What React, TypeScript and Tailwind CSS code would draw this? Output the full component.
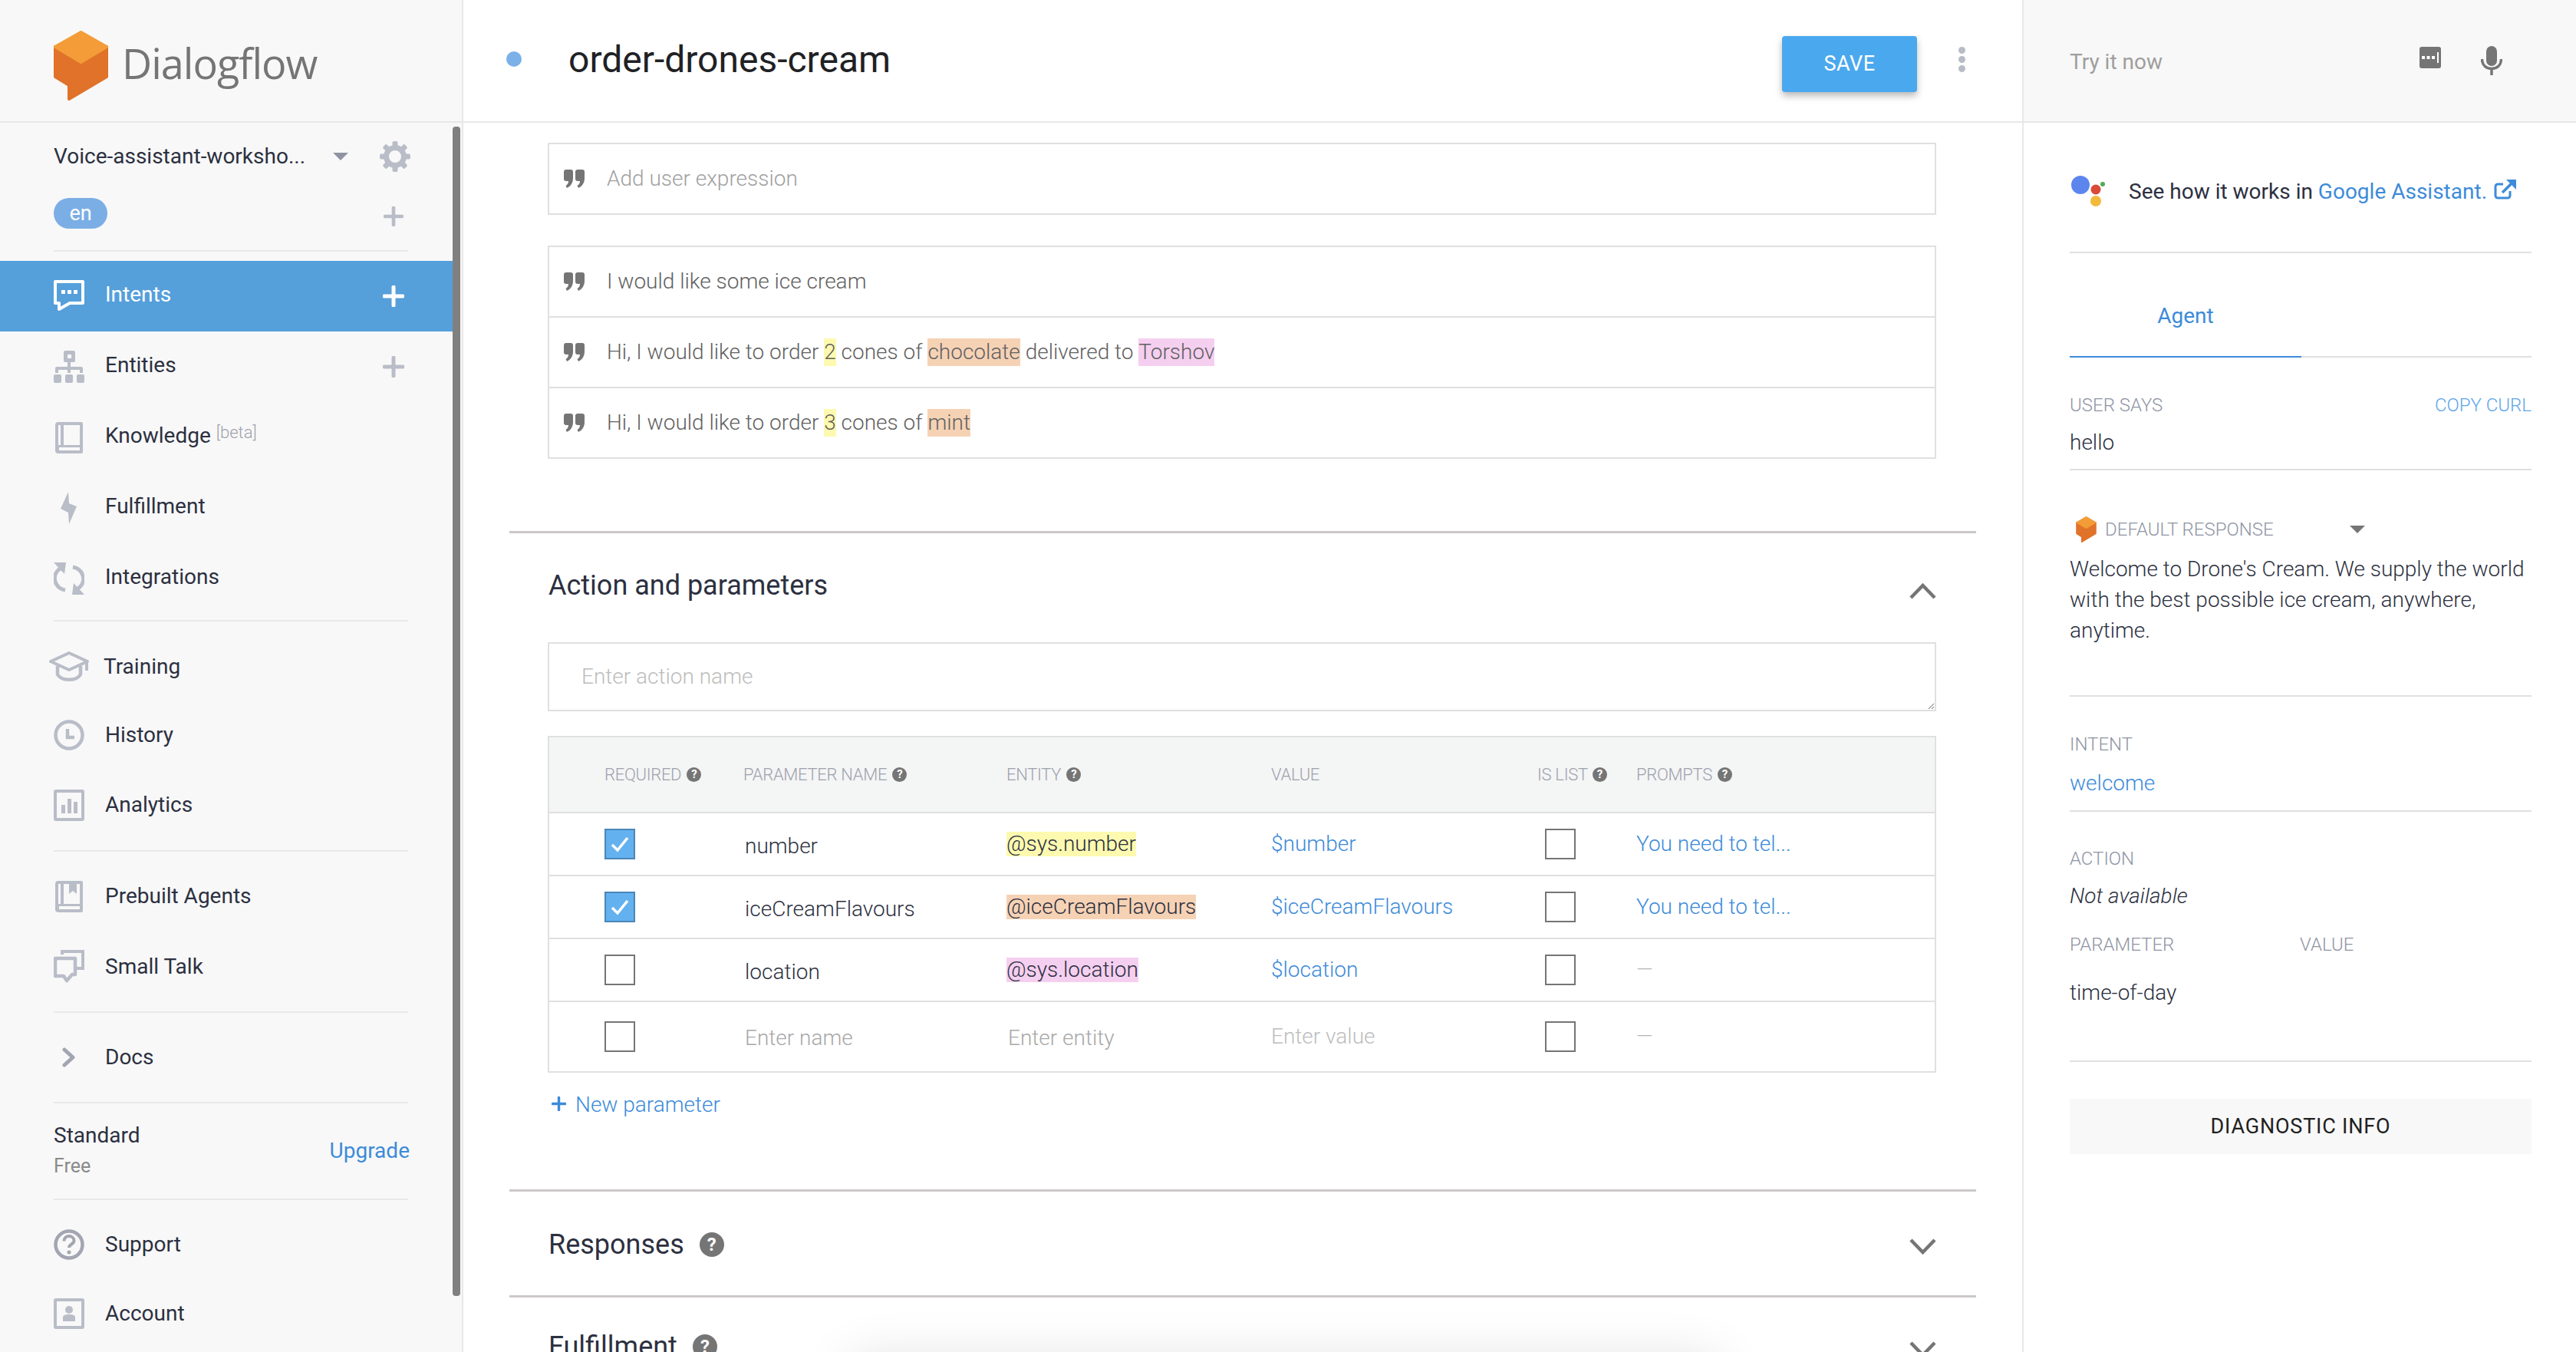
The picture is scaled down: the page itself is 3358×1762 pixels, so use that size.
import type { ReactNode } from 'react';

const iconGray = '#b9bdc8';

function Logo({ className }: { className: string }) {
  return (
    <svg className={className} viewBox="0 0 71 91">
      <path
        d="M2 21 35.5 41 69 21V60L20 89V71L2 60Z"
        fill="#e0722a"
        stroke="#e0722a"
        strokeWidth="4"
        strokeLinejoin="round"
      />
      <path
        d="M35.5 2 69 21 35.5 41 2 21Z"
        fill="#f39c38"
        stroke="#f39c38"
        strokeWidth="4"
        strokeLinejoin="round"
      />
    </svg>
  );
}

function Plus({ className, color = iconGray }: { className: string; color?: string }) {
  return (
    <svg className={className} viewBox="0 0 28 28">
      <path d="M14 2v24M2 14h24" stroke={color} strokeWidth="5" strokeLinecap="round" />
    </svg>
  );
}

function GearIcon() {
  const teeth = [0, 45, 90, 135, 180, 225, 270, 315];
  return (
    <svg className="w-[40px] h-[40px] ml-[41px]" viewBox="0 0 40 40">
      <circle cx="20" cy="20" r="11.5" fill="none" stroke={iconGray} strokeWidth="7" />
      {teeth.map((deg) => (
        <rect key={deg} x="16.500" y="0" width="7" height="8" rx="2" fill={iconGray} transform={`rotate(${deg} 20 20)`} />
      ))}
    </svg>
  );
}

function IntentsIcon() {
  return (
    <svg className="w-[40px] h-[42px]" viewBox="0 0 40 42">
      <path d="M2 2H38V30H21L7 38V30H2Z" fill="none" stroke="#fff" strokeWidth="4" strokeLinejoin="round" />
      <path d="M10 13h5v5h-5zM18 13h5v5h-5zM26 13h5v5h-5z" fill="#fff" />
    </svg>
  );
}

function EntitiesIcon() {
  return (
    <svg className="w-[40px] h-[42px]" viewBox="0 0 40 42">
      <path
        d="M15 0h11a2 2 0 0 1 2 2v11a2 2 0 0 1-2 2h-4v6h14a2 2 0 0 1 2 2v6h-4v-4H22v4h-4v-4H6v4H2v-6a2 2 0 0 1 2-2h14v-6h-3a2 2 0 0 1-2-2V2a2 2 0 0 1 2-2Zm3 5v5h5V5Z"
        fill={iconGray}
        fillRule="evenodd"
      />
      <rect x="0" y="31" width="10" height="11" rx="2" fill={iconGray} />
      <rect x="15" y="31" width="10" height="11" rx="2" fill={iconGray} />
      <rect x="30" y="31" width="10" height="11" rx="2" fill={iconGray} />
    </svg>
  );
}

function BookIcon({ mark = false }: { mark?: boolean }) {
  return (
    <svg className="w-[36px] h-[41px]" viewBox="0 0 36 41">
      <path
        d="M4 0h30a2 2 0 0 1 2 2v37a2 2 0 0 1-2 2H4a4 4 0 0 1-4-4V4a4 4 0 0 1 4-4Zm3 4H4v26h3Zm4 0v26h21V4ZM5 33v4h27v-4Z"
        fill={iconGray}
        fillRule="evenodd"
      />
      {mark && <path d="M18 2h10v15l-5-4-5 4Z" fill={iconGray} />}
    </svg>
  );
}

function BoltIcon() {
  return (
    <svg className="w-[22px] h-[42px]" viewBox="0 0 22 42">
      <path d="M10 0 11 15 21 19 11 42 10 27 0 22Z" fill={iconGray} />
    </svg>
  );
}

function SyncIcon() {
  return (
    <svg className="w-[40px] h-[42px]" viewBox="0 0 40 42">
      <path d="M10 7C3 11 0 18 2 25c2 6 7 10 13 11" fill="none" stroke={iconGray} strokeWidth="5" />
      <path d="M30 35c7-4 10-11 8-18C36 11 31 7 25 6" fill="none" stroke={iconGray} strokeWidth="5" />
      <path d="M0 0H16L14 15Z" fill={iconGray} />
      <path d="M40 42H24L26 27Z" fill={iconGray} />
    </svg>
  );
}

function CapIcon() {
  return (
    <svg className="w-[54px] h-[40px] -mx-[7px] shrink-0" viewBox="0 0 54 40">
      <path d="M27 2 51 13 27 24 3 13Z" fill="none" stroke={iconGray} strokeWidth="4" strokeLinejoin="round" />
      <path d="M12 19V30c5 9 25 9 30 0V19" fill="none" stroke={iconGray} strokeWidth="4.5" />
      <path d="M50 13V25" stroke={iconGray} strokeWidth="4" />
    </svg>
  );
}

function ClockIcon() {
  return (
    <svg className="w-[40px] h-[40px]" viewBox="0 0 40 40">
      <circle cx="20" cy="20" r="17.5" fill="none" stroke={iconGray} strokeWidth="4.5" />
      <path d="M18 12v11h9" fill="none" stroke={iconGray} strokeWidth="4.5" />
    </svg>
  );
}

function ChartIcon() {
  return (
    <svg className="w-[40px] h-[41px]" viewBox="0 0 40 41">
      <rect x="2" y="2" width="36" height="37" fill="none" stroke={iconGray} strokeWidth="4" rx="1" />
      <path d="M10 20h5v11h-5zM18 12h5v19h-5zM26 16h5v15h-5z" fill={iconGray} />
    </svg>
  );
}

function TalkIcon() {
  return (
    <svg className="w-[40px] h-[44px]" viewBox="0 0 40 44">
      <path d="M11 6V2H38V24H29" fill="none" stroke={iconGray} strokeWidth="4" />
      <path d="M2 11H28V32H24L17 40 13 34H2Z" fill="none" stroke={iconGray} strokeWidth="4.5" strokeLinejoin="round" />
    </svg>
  );
}

function ChevronRight() {
  return (
    <svg className="w-[18px] h-[26px]" viewBox="0 0 18 26">
      <path d="M3 3 14 13 3 23" fill="none" stroke="#a2a6b2" strokeWidth="5" strokeLinecap="round" strokeLinejoin="round" />
    </svg>
  );
}

function SupportIcon() {
  return (
    <svg className="w-[40px] h-[40px]" viewBox="0 0 40 40">
      <circle cx="20" cy="20" r="17.5" fill="none" stroke="#a2a6b2" strokeWidth="4.5" />
      <path d="M13.5 15.5c0-4 3-6.5 6.5-6.5s6.5 2.500 6.500 6c0 4.500-6.500 4.500-6.500 9" fill="none" stroke="#a2a6b2" strokeWidth="4" />
      <circle cx="20" cy="30" r="2.500" fill="#a2a6b2" />
    </svg>
  );
}

function AccountIcon() {
  return (
    <svg className="w-[40px] h-[40px]" viewBox="0 0 40 40">
      <rect x="2" y="2" width="36" height="36" fill="none" stroke={iconGray} strokeWidth="4" rx="1" />
      <circle cx="20" cy="15" r="5" fill={iconGray} />
      <path d="M12 30v-5c0-3 3-4 8-4s8 1 8 4v5Z" fill={iconGray} />
    </svg>
  );
}

function NavRow({
  icon,
  label,
  extra,
  lift = false,
  className = 'h-[92px]',
}: {
  icon: ReactNode;
  label: ReactNode;
  extra?: ReactNode;
  lift?: boolean;
  className?: string;
}) {
  return (
    <div className={`flex items-center pl-[70px] pr-[66px] text-[28px] text-[#2c3040] ${className}`}>
      <span className="w-[40px] flex items-center justify-center shrink-0">{icon}</span>
      <span className={`ml-[27px] flex-1 ${lift ? '-mt-[4px]' : ''}`}>{label}</span>
      {extra}
    </div>
  );
}

function Divider() {
  return <div className="ml-[70px] w-[462px] h-[2px] bg-[#e8e8e8]" />;
}

function Sidebar() {
  return (
    <aside className="relative w-[604px] shrink-0 h-full bg-[#f8f8f8] border-r-2 border-[#e8e8e8]">
      <div className="h-[160px] border-b-2 border-[#e8e8e8] pl-[70px] flex items-center">
        <Logo className="w-[71px] h-[91px] mt-[12px]" />
        <span className="ml-[18px] mt-[6px] text-[54px] font-medium tracking-[-1px] text-[#757575] font-['Open_Sans',sans-serif] leading-none">
          Dialogflow
        </span>
      </div>
      <div className="absolute left-[590px] top-[165px] h-[1524px] w-[10px] rounded-[4px] bg-[#808080]" />

      <div className="flex items-center h-[88px] pl-[70px] text-[28px] text-[#2c3040]">
        <span className="w-[364px]">Voice-assistant-worksho...</span>
        <span className="w-0 h-0 border-x-[10px] border-t-[10px] border-x-transparent border-t-[#8f94a3]" />
        <GearIcon />
      </div>
      <div className="flex items-center justify-between mt-[10px] pl-[70px] pr-[76px] h-[40px]">
        <span className="w-[70px] h-[40px] rounded-full bg-[#7baee5] text-white text-[27px] flex items-center justify-center">
          en
        </span>
        <Plus className="w-[26px] h-[26px] mt-[8px]" />
      </div>
      <div className="mt-[28px]">
        <Divider />
      </div>

      <div className="mt-[12px] mr-[12px]">
        <NavRow
          lift
          className="h-[92px] bg-[#559fdb] !text-white"
          icon={<IntentsIcon />}
          label="Intents"
          extra={<Plus className="w-[28px] h-[28px] mr-[-3px]" color="#fff" />}
        />
      </div>
      <NavRow lift icon={<EntitiesIcon />} label="Entities" extra={<Plus className="w-[28px] h-[28px] mr-[9px]" />} />
      <NavRow
        lift
        icon={<BookIcon />}
        label={
          <>
            Knowledge{' '}
            <sup className="text-[22px] font-light text-[#9ea1ad] relative -top-[6px]">[beta]</sup>
          </>
        }
      />
      <NavRow lift icon={<BoltIcon />} label="Fulfillment" />
      <NavRow lift icon={<SyncIcon />} label="Integrations" />

      <div className="mt-[8px]">
        <Divider />
      </div>
      <div className="mt-[15px]">
        <NavRow className="h-[88px]" icon={<CapIcon />} label={<span className="-ml-[2px]">Training</span>} />
        <NavRow className="h-[90px]" icon={<ClockIcon />} label="History" />
        <NavRow icon={<ChartIcon />} label="Analytics" />
      </div>

      <div className="mt-[13px]">
        <Divider />
      </div>
      <div className="mt-[12px]">
        <NavRow icon={<BookIcon mark />} label="Prebuilt Agents" />
        <NavRow icon={<TalkIcon />} label="Small Talk" />
      </div>

      <div className="mt-[12px]">
        <Divider />
      </div>
      <div className="mt-[12px]">
        <NavRow icon={<ChevronRight />} label="Docs" />
      </div>
      <div className="mt-[12px]">
        <Divider />
      </div>

      <div className="h-[124px] pl-[70px] pr-[68px] flex items-center justify-between">
        <div>
          <div className="text-[28px] leading-[40px] text-[#2c3040]">Standard</div>
          <div className="text-[25px] leading-[40px] text-[#8a8a8a]">Free</div>
        </div>
        <span className="text-[28px] text-[#3d8bd9]">Upgrade</span>
      </div>
      <Divider />
      <div className="mt-[12px]">
        <NavRow icon={<SupportIcon />} label="Support" />
        <NavRow className="h-[88px]" icon={<AccountIcon />} label="Account" />
      </div>
    </aside>
  );
}

function QuoteIcon() {
  return (
    <svg className="w-[27px] h-[24px] shrink-0" viewBox="0 0 27 24">
      <path
        d="M0 3a3 3 0 0 1 3-3h6a3 3 0 0 1 3 3v8c0 6-3 11-8 13l-1.500-3c2-1 3.500-3 3.500-6H3a3 3 0 0 1-3-3Z"
        fill="#757575"
      />
      <path
        d="M15 3a3 3 0 0 1 3-3h6a3 3 0 0 1 3 3v8c0 6-3 11-8 13l-1.500-3c2-1 3.500-3 3.500-6h-3a3 3 0 0 1-3-3Z"
        fill="#757575"
      />
    </svg>
  );
}

function Phrase({ children }: { children: ReactNode }) {
  return (
    <div className="flex-1 flex items-center pl-[19px]">
      <QuoteIcon />
      <div className="ml-[29px] text-[28px] font-light text-[#616161]">{children}</div>
    </div>
  );
}

function Mark({ color, children }: { color: string; children: ReactNode }) {
  return (
    <span className="inline-block leading-[36px]" style={{ backgroundColor: color }}>
      {children}
    </span>
  );
}

function Help({ className = 'w-[19px] h-[19px] text-[15px]' }: { className?: string }) {
  return (
    <span className={`inline-flex items-center justify-center rounded-full bg-[#757575] text-white font-bold leading-none shrink-0 ${className}`}>
      ?
    </span>
  );
}

function Check({ checked }: { checked?: boolean }) {
  if (checked) {
    return (
      <span className="w-[40px] h-[40px] flex items-center justify-center bg-[#64b1ef] border-2 border-[#4a86b8]">
        <svg className="w-[28px] h-[24px]" viewBox="0 0 28 24">
          <path d="M4 13 11 20 24 4" fill="none" stroke="#fff" strokeWidth="3.500" />
        </svg>
      </span>
    );
  }
  return <span className="block w-[40px] h-[40px] bg-white border-2 border-[#757575]" />;
}

const HIGHLIGHT = { yellow: '#fdfab0', orange: '#f6d2b5', pink: '#f5cff0' };

const params = [
  { required: true, name: 'number', entity: '@sys.number', color: HIGHLIGHT.yellow, value: '$number', prompt: 'You need to tel...' },
  { required: true, name: 'iceCreamFlavours', entity: '@iceCreamFlavours', color: HIGHLIGHT.orange, value: '$iceCreamFlavours', prompt: 'You need to tel...' },
  { required: false, name: 'location', entity: '@sys.location', color: HIGHLIGHT.pink, value: '$location', prompt: '' },
];

function ParamTable() {
  return (
    <div className="mt-[32px] h-[439px] border-2 border-[#e0e0e0] flex flex-col text-[28px] font-light">
      <div className="h-[99px] shrink-0 border-b-2 border-[#e0e0e0] bg-[#f4f5f5] grid grid-cols-[253px_343px_345px_347px_129px_1fr] items-center text-[22px] text-[#9ea1ad] tracking-[-0.3px]">
        <span className="pl-[72px] flex items-center gap-[7px]">REQUIRED <Help /></span>
        <span className="flex items-center gap-[7px]">PARAMETER NAME <Help /></span>
        <span className="flex items-center gap-[7px]">ENTITY <Help /></span>
        <span>VALUE</span>
        <span className="flex items-center gap-[6px]">IS LIST <Help /></span>
        <span className="flex items-center gap-[7px]">PROMPTS <Help /></span>
      </div>
      {params.map((p) => (
        <div
          key={p.name}
          className="h-[82px] shrink-0 border-b-2 border-[#e0e0e0] grid grid-cols-[253px_343px_345px_347px_129px_1fr] items-center"
        >
          <span className="pl-[72px]"><Check checked={p.required} /></span>
          <span className="pt-[5px] pl-[2px] text-[#2c3040]">{p.name}</span>
          <span className="text-[#2c3040]">
            <span className="inline-block leading-[32px]" style={{ backgroundColor: p.color }}>
              {p.entity}
            </span>
          </span>
          <span className="text-[#3d8bd9]">{p.value}</span>
          <span className="pl-[10px]"><Check /></span>
          {p.prompt ? (
            <span className="text-[#3d8bd9]">{p.prompt}</span>
          ) : (
            <span className="text-[#b5b5b5]">—</span>
          )}
        </div>
      ))}
      <div className="flex-1 grid grid-cols-[253px_343px_345px_347px_129px_1fr] items-center text-[#a8a8a8]">
        <span className="pl-[72px]"><Check /></span>
        <span className="pt-[4px] pl-[2px]">Enter name</span>
        <span className="pt-[4px] pl-[2px]">Enter entity</span>
        <span className="text-[#bdbdbd]">Enter value</span>
        <span className="pl-[10px]"><Check /></span>
        <span className="text-[#b5b5b5]">—</span>
      </div>
    </div>
  );
}

function Chevron({ up, className }: { up?: boolean; className: string }) {
  return (
    <svg className={`w-[35px] h-[21px] ${className}`} viewBox="0 0 35 21">
      <path
        d={up ? 'M2 19 17.500 3 33 19' : 'M2 2 17.500 18 33 2'}
        fill="none"
        stroke="#757575"
        strokeWidth="4.500"
      />
    </svg>
  );
}

function Main() {
  return (
    <main className="w-[2032px] shrink-0 h-full overflow-hidden">
      <header className="h-[160px] border-b-2 border-[#e8e8e8] flex items-center pl-[56px] pr-[74px]">
        <span className="w-[20px] h-[20px] rounded-full bg-[#7bb0e8] -mt-[4px]" />
        <h1 className="ml-[61px] flex-1 text-[48px] text-[#202124] -mt-[3px]">order-drones-cream</h1>
        <button className="w-[176px] h-[73px] mt-[8px] rounded-[4px] bg-[#4aa8ee] text-white text-[27px] tracking-[0.5px] shadow-[0_5px_10px_rgba(0,0,0,0.28)]">
          SAVE
        </button>
        <div className="ml-[54px] -mt-[4px] flex flex-col gap-[3px]">
          <span className="w-[9px] h-[9px] rounded-full bg-[#b8bcc7]" />
          <span className="w-[9px] h-[9px] rounded-full bg-[#b8bcc7]" />
          <span className="w-[9px] h-[9px] rounded-full bg-[#b8bcc7]" />
        </div>
      </header>

      <div className="ml-[60px] w-[1912px]">
        <div className="px-[50px] pr-[52px] pt-[26px]">
          <div className="h-[94px] border-2 border-[#e0e0e0] flex">
            <div className="flex-1 flex items-center pl-[19px]">
              <QuoteIcon />
              <span className="ml-[29px] text-[28px] font-light text-[#a0a0a0]">Add user expression</span>
            </div>
          </div>
          <div className="mt-[40px] h-[278px] border-2 border-[#e0e0e0] flex flex-col divide-y-2 divide-[#e0e0e0]">
            <Phrase>I would like some ice cream</Phrase>
            <Phrase>
              Hi, I would like to order <Mark color={HIGHLIGHT.yellow}>2</Mark> cones of{' '}
              <Mark color={HIGHLIGHT.orange}>chocolate</Mark> delivered to{' '}
              <Mark color={HIGHLIGHT.pink}>Torshov</Mark>
            </Phrase>
            <Phrase>
              Hi, I would like to order <Mark color={HIGHLIGHT.yellow}>3</Mark> cones of{' '}
              <Mark color={HIGHLIGHT.orange}>mint</Mark>
            </Phrase>
          </div>
        </div>

        <section className="mt-[94px] border-t-[3px] border-[#ccc8c8] pl-[51px] pr-[52px]">
          <div className="h-[142px] flex items-center justify-between">
            <h2 className="text-[36px] text-[#2c3040] -mt-[6px]">Action and parameters</h2>
            <Chevron up className="mt-[8px]" />
          </div>
          <div className="-ml-[1px]">
            <textarea
              readOnly
              placeholder="Enter action name"
              className="block w-full h-[90px] border-2 border-[#e0e0e0] pl-[42px] pt-[23px] text-[28px] leading-[40px] font-light placeholder:text-[#bdbdbd] outline-none"
            />
            <ParamTable />
          </div>
          <div className="mt-[24px] h-[36px] flex items-center text-[28px] text-[#3d8bd9] pl-[4px]">
            <Plus className="w-[19px] h-[19px] -mt-[4px]" color="#3d8bd9" />
            <span className="ml-[12px] font-light">New parameter</span>
          </div>
        </section>

        <section className="mt-[92px] border-t-[3px] border-[#ccc8c8] pl-[51px] pr-[52px]">
          <div className="h-[135px] flex items-center justify-between">
            <div className="flex items-center pt-[2px]">
              <h2 className="text-[36px] text-[#2c3040]">Responses</h2>
              <Help className="ml-[20px] w-[32px] h-[32px] text-[24px]" />
            </div>
            <Chevron className="mt-[8px]" />
          </div>
        </section>
        <section className="border-t-[3px] border-[#ccc8c8] pl-[51px] pr-[52px]">
          <div className="h-[126px] flex items-center justify-between">
            <div className="flex items-center pt-[2px]">
              <h2 className="text-[36px] text-[#2c3040]">Fulfillment</h2>
              <Help className="ml-[20px] w-[32px] h-[32px] text-[24px]" />
            </div>
            <Chevron className="mt-[8px]" />
          </div>
        </section>
      </div>
    </main>
  );
}

function Label({ children }: { children: ReactNode }) {
  return <div className="text-[24px] leading-[30px] font-light text-[#8f94a3]">{children}</div>;
}

function RightPanel() {
  return (
    <aside className="flex-1 h-full border-l-2 border-[#e8e8e8] font-['Roboto',sans-serif]">
      <div className="h-[160px] border-b-2 border-[#e8e8e8] bg-[#f8f8f8] flex items-center pl-[60px] pr-[96px]">
        <span className="flex-1 text-[28px] text-[#9e9e9e] pt-[4px]">Try it now</span>
        <svg className="w-[28px] h-[28px] -mt-[8px]" viewBox="0 0 28 28">
          <rect width="28" height="28" rx="3" fill="#757575" />
          <path d="M3 12h4v4H3zM9.500 12h4v4h-4zM16 12h4v4h-4z" fill="#fff" />
          <path d="M24 7v14" stroke="#fff" strokeWidth="2" />
        </svg>
        <svg className="ml-[52px] w-[28px] h-[38px]" viewBox="0 0 28 38">
          <rect x="7" y="0" width="14" height="26" rx="7" fill="#757575" />
          <path d="M1.500 17c0 8 5.500 12.500 12.500 12.500S26.500 25 26.500 17M14 29v9" fill="none" stroke="#757575" strokeWidth="3.500" />
        </svg>
      </div>

      <div className="pl-[60px] pr-[58px]">
        <div className="h-[170px] border-b-2 border-[#e0e0e0] flex items-center pt-[12px]">
          <svg className="w-[48px] h-[42px] -mt-[4px] shrink-0" viewBox="0 0 48 42">
            <circle cx="14" cy="14" r="12" fill="#5c85ee" />
            <circle cx="34" cy="20" r="6.500" fill="#d94a38" />
            <circle cx="43" cy="13" r="3" fill="#56a853" />
            <circle cx="34" cy="35" r="7" fill="#f3b93b" />
          </svg>
          <span className="ml-[29px] text-[28px] text-[#2c3040] whitespace-nowrap">
            See how it works in <span className="text-[#3d8bd9]">Google Assistant.</span>
          </span>
          <svg className="ml-[9px] w-[29px] h-[26px] -mt-[6px]" viewBox="0 0 29 26">
            <path d="M21 15v6a3 3 0 0 1-3 3H5a3 3 0 0 1-3-3V9a3 3 0 0 1 3-3h7" fill="none" stroke="#3d8bd9" strokeWidth="3" />
            <path d="M11 17 25 3" stroke="#3d8bd9" strokeWidth="3.500" />
            <path d="M16 0H29V13Z" fill="#3d8bd9" />
          </svg>
        </div>

        <div className="h-[136px] border-b-2 border-[#e0e0e0]">
          <div className="w-[302px] h-[136px] border-b-2 border-[#3d8bd9] flex items-center justify-center pt-[30px] text-[28px] text-[#3d8bd9]">
            Agent
          </div>
        </div>

        <div className="mt-[47px] flex justify-between">
          <Label>USER SAYS</Label>
          <span className="text-[24px] leading-[30px] font-light text-[#5ea5e8]">COPY CURL</span>
        </div>
        <div className="mt-[14px] pb-[14px] border-b-2 border-[#e0e0e0] text-[28px] leading-[40px] font-light text-[#2c3040]">
          hello
        </div>

        <div className="mt-[60px] flex items-center h-[34px]">
          <Logo className="w-[27px] h-[34px] ml-[8px]" />
          <span className="ml-[11px] w-[319px] text-[24px] font-light text-[#8f94a3]">DEFAULT RESPONSE</span>
          <span className="w-0 h-0 border-x-[10px] border-t-[10px] border-x-transparent border-t-[#757575]" />
        </div>
        <div className="mt-[15px] pb-[64px] border-b-2 border-[#e0e0e0] text-[28px] leading-[40px] font-light text-[#2c3040]">
          Welcome to Drone&apos;s Cream. We supply the world with the best possible ice cream, anywhere, anytime.
        </div>

        <div className="mt-[47px]"><Label>INTENT</Label></div>
        <div className="mt-[16px] pb-[15px] border-b-2 border-[#e0e0e0] text-[28px] leading-[40px] font-light text-[#3d8bd9]">
          welcome
        </div>

        <div className="mt-[46px]"><Label>ACTION</Label></div>
        <div className="mt-[14px] text-[28px] leading-[40px] font-light italic text-[#2c3040]">Not available</div>
        <div className="mt-[28px] grid grid-cols-[300px_1fr]">
          <Label>PARAMETER</Label>
          <Label>VALUE</Label>
        </div>
        <div className="mt-[28px] pb-[68px] border-b-2 border-[#e0e0e0] text-[28px] leading-[40px] font-light text-[#2c3040]">
          time-of-day
        </div>

        <div className="mt-[48px] h-[72px] bg-[#f8f8f8] flex items-center justify-center text-[27px] tracking-[0.8px] text-[#212121]">
          DIAGNOSTIC INFO
        </div>
      </div>
    </aside>
  );
}

export default function App() {
  return (
    <div className="relative w-[3358px] h-[1762px] overflow-hidden flex bg-white font-['Roboto',sans-serif]">
      <Sidebar />
      <Main />
      <RightPanel />
      {/* snackbar sitting just under the fold, only its shadow shows */}
      <div className="absolute left-[1110px] top-[1775px] w-[1130px] h-[60px] shadow-[0_0_70px_rgba(0,0,0,0.14)]" />
    </div>
  );
}
